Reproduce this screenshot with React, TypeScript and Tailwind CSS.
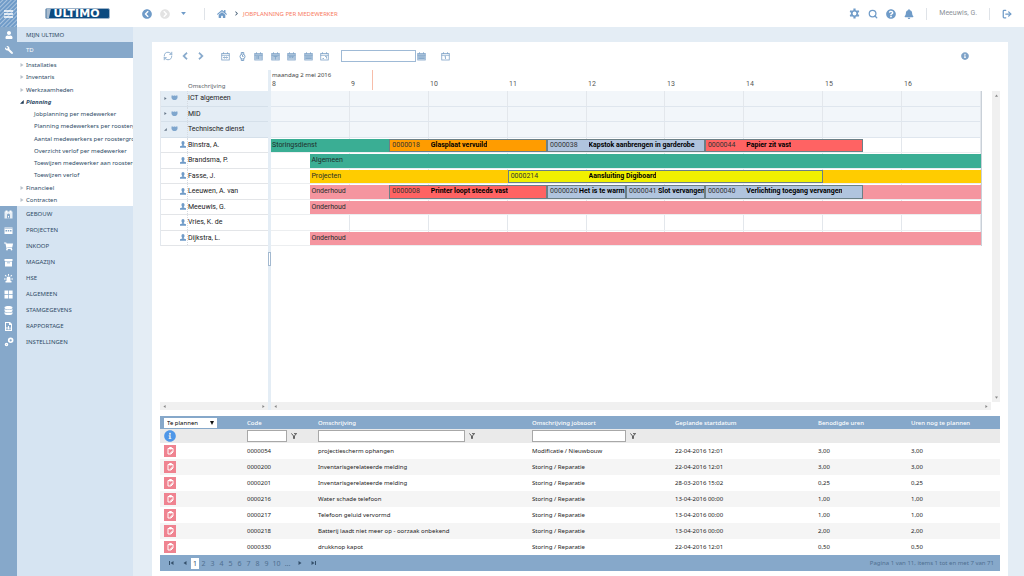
import React from "react";
import { FaHome, FaWrench, FaUser, FaBell, FaQuestionCircle, FaInfoCircle, FaShoppingCart, FaDatabase, FaChevronCircleLeft, FaChevronCircleRight, FaChevronLeft, FaChevronRight } from "react-icons/fa";
import { Search, RefreshCw, LogOut } from "lucide-react";

type IconProps = { className?: string };

function Gear() {
  return (
    <svg viewBox="0 0 20 20" className="size-[11px]" fill="none" stroke="currentColor">
      <circle cx="10" cy="10" r="5" strokeWidth="3" />
      <path d="M10 1V4M10 16V19M2.200 5.500L4.800 7M15.200 13L17.800 14.500M2.200 14.500L4.800 13M15.200 7L17.800 5.500" strokeWidth="4" />
    </svg>
  );
}

function Calendar({ className = "", kind = 0 }: IconProps & { kind?: number }) {
  const solid = kind >= 2 && kind <= 5;
  return (
    <svg viewBox="0 0 18 18" className={`size-[9px] ${className}`} fill="none" stroke="currentColor" strokeWidth="1.6">
      <rect x="1.5" y="3" width="15" height="13" />
      <path d="M1 6.5H17M5 0.5V4M13 0.5V4" />
      {solid && <rect x="2" y="4" width="14" height="11" fill="currentColor" fillOpacity="0.6" stroke="none" />}
      {kind === 0 && <path d="M5 11H13M7 9L5 11L7 13M11 9L13 11L11 13" />}
      {kind === 2 && <path d="M6 8V14M9 8V14" />}
      {kind === 3 && <path d="M5 9H13M9 9V15" />}
      {kind === 4 && <path d="M4 9.500H14M6 9V12M11 9V12" />}
      {kind === 5 && <path d="M3 10H15M3 13H15" />}
      {kind === 6 && <path d="M5 13H8M10 9H13V13" />}
      {kind === 7 && <path d="M7 9.500L9 8.500V14" />}
    </svg>
  );
}

function Watch() {
  return (
    <svg viewBox="0 0 18 18" className="size-[9px]" fill="none" stroke="currentColor" strokeWidth="2">
      <circle cx="9" cy="9" r="5" />
      <path d="M6.500 4V1H11.500V4M6.500 14V17H11.500V14M9 6V9H11" />
    </svg>
  );
}

function Rail({ kind }: { kind: string }) {
  if (kind === "cart") return <FaShoppingCart className="size-[9px]" />;
  if (kind === "data") return <FaDatabase className="size-[9px]" />;
  if (kind === "gears") return (
    <svg viewBox="0 0 18 18" className="size-[10px]" fill="none" stroke="currentColor">
      <circle cx="12" cy="6" r="3.500" strokeWidth="3" />
      <circle cx="4.500" cy="13.500" r="2" strokeWidth="2.500" />
    </svg>
  );
  return (
    <svg viewBox="0 0 18 18" className="size-[9px]" fill="currentColor">
      {kind === "building" && (
        <>
          <path d="M1 3h16v14H1z" fillOpacity=".8" />
          <path d="M3 1h4v4H3zM11 1h4v4h-4z" />
          <path d="M6 17V9l3-2 3 2v8z" fill="#86a8ca" />
          <path d="M8 12h2v3H8z" />
        </>
      )}
      {kind === "projects" && (
        <>
          <path d="M1 3h16v13H1z" />
          <path d="M3 8h3v3H3zM7.500 8h3v3h-3zM12 8h3v3h-3zM1 5h16v1H1z" fill="#86a8ca" />
        </>
      )}
      {kind === "box" && (
        <>
          <path d="M1 2h16v4H1zM2 7h14v10H2z" />
          <path d="M6 9h6v1.500H6z" fill="#86a8ca" />
        </>
      )}
      {kind === "alarm" && <path d="M5 14V9a4 4 0 0 1 8 0v5h2v3H3v-3zM8 0h2v3.500H8zM1.500 3l1.500-1.500 2.500 2.500L4 5.500zM16.500 3L15 1.500 12.500 4 14 5.500zM0 9h3.500v2H0zM14.500 9H18v2h-3.500z" />}
      {kind === "windows" && <path d="M1 1h7.400v7.400H1zM9.800 1h7.400v7.400H9.800zM1 9.800h7.400v7.400H1zM9.800 9.800h7.400v7.400H9.800z" />}
      {kind === "report" && (
        <>
          <path d="M2 0h10l4 4v14H2zM4 2v14h10V6h-4V2z" fillRule="evenodd" />
          <path d="M5 10h2v5H5zM8 8h2v7H8zM11 11h2v4h-2z" />
        </>
      )}
    </svg>
  );
}

function Person({ className = "" }: IconProps) {
  return (
    <svg viewBox="0 0 14 16" className={className} fill="currentColor">
      <path d="M7 0a3.600 4 0 0 1 3.600 4C10.600 6.500 9.500 8 8.700 9v1.500L14 12v3.500H0V12l5.300-1.500V9C4.500 8 3.400 6.500 3.400 4A3.600 4 0 0 1 7 0z" />
    </svg>
  );
}

function Group() {
  return (
    <svg viewBox="0 0 14 12" className="h-[6px] w-[7px] text-[#7fa6cd]" fill="currentColor">
      <path d="M1 1h3l1 1 1-1h2l1 1 1-1h3v5l-2 3-2 1H5L3 9 1 6z" />
    </svg>
  );
}

function Triangle({ open = false, className = "size-1" }: IconProps & { open?: boolean }) {
  return (
    <svg viewBox="0 0 8 8" className={`shrink-0 ${className}`} fill="currentColor">
      {open ? <path d="M7.500 0V7.500H0z" /> : <path d="M1 0L7 4L1 8z" />}
    </svg>
  );
}

function Funnel() {
  return (
    <svg viewBox="0 0 14 14" className="size-[6px]" fill="none" stroke="#444" strokeWidth="2">
      <path d="M1 1L6 7V13H8V7L13 1M7 1.500H13" />
    </svg>
  );
}

type Node = { label: string; depth: 0 | 1; open?: boolean };
const tree: Node[] = [
  { label: "Installaties", depth: 0 },
  { label: "Inventaris", depth: 0 },
  { label: "Werkzaamheden", depth: 0 },
  { label: "Planning", depth: 0, open: true },
  { label: "Jobplanning per medewerker", depth: 1 },
  { label: "Planning medewerkers per roostergroep", depth: 1 },
  { label: "Aantal medewerkers per roostergroep", depth: 1 },
  { label: "Overzicht verlof per medewerker", depth: 1 },
  { label: "Toewijzen medewerker aan roostergroep", depth: 1 },
  { label: "Toewijzen verlof", depth: 1 },
  { label: "Financieel", depth: 0 },
  { label: "Contracten", depth: 0 },
];

const modules = [
  ["GEBOUW", "building"],
  ["PROJECTEN", "projects"],
  ["INKOOP", "cart"],
  ["MAGAZIJN", "box"],
  ["HSE", "alarm"],
  ["ALGEMEEN", "windows"],
  ["STAMGEGEVENS", "data"],
  ["RAPPORTAGE", "report"],
  ["INSTELLINGEN", "gears"],
];

type Shift = { label: string; from: number; to: number; color: string };
type Job = { code: string; title: string; from: number; to: number; color: string };
type Row = { name: string; group?: "open" | "closed"; shift?: Shift; jobs?: Job[] };

const GREEN = "bg-[#3aae94]";
const PINK = "bg-[#f5959f]";
const BLUE = "bg-[#b0c4de]";
const RED = "bg-[#ff6363]";

const rows: Row[] = [
  { name: "ICT algemeen", group: "closed" },
  { name: "MID", group: "closed" },
  { name: "Technische dienst", group: "open" },
  {
    name: "Binstra, A.",
    shift: { label: "Storingsdienst", from: 8, to: 9.5, color: GREEN },
    jobs: [
      { code: "0000018", title: "Glasplaat vervuild", from: 9.5, to: 11.5, color: "bg-[#ff9c00]" },
      { code: "0000038", title: "Kapstok aanbrengen in garderobe", from: 11.5, to: 13.5, color: BLUE },
      { code: "0000044", title: "Papier zit vast", from: 13.5, to: 15.5, color: RED },
    ],
  },
  { name: "Brandsma, P.", shift: { label: "Algemeen", from: 8.5, to: 17, color: GREEN } },
  {
    name: "Fasse, J.",
    shift: { label: "Projecten", from: 8.5, to: 17, color: "bg-[#ffcc00]" },
    jobs: [{ code: "0000214", title: "Aansluiting Digiboard", from: 11, to: 15, color: "bg-[#f0f000]" }],
  },
  {
    name: "Leeuwen, A. van",
    shift: { label: "Onderhoud", from: 8.5, to: 17, color: PINK },
    jobs: [
      { code: "0000008", title: "Printer loopt steeds vast", from: 9.5, to: 11.5, color: RED },
      { code: "0000020", title: "Het is te warm", from: 11.5, to: 12.5, color: BLUE },
      { code: "0000041", title: "Slot vervangen te", from: 12.5, to: 13.5, color: BLUE },
      { code: "0000040", title: "Verlichting toegang vervangen", from: 13.5, to: 15.5, color: BLUE },
    ],
  },
  { name: "Meeuwis, G.", shift: { label: "Onderhoud", from: 8.5, to: 17, color: PINK } },
  { name: "Vries, K. de" },
  { name: "Dijkstra, L.", shift: { label: "Onderhoud", from: 8.5, to: 17, color: PINK } },
];

const hours = [8, 9, 10, 11, 12, 13, 14, 15, 16];
const span = (from: number, to: number) => ({ gridColumn: `${(from - 8) * 2 + 1} / ${(to - 8) * 2 + 1}` });

const openJobs = [
  ["0000054", "projectiescherm ophangen", "Modificatie / Nieuwbouw", "22-04-2016 12:01", "3,00"],
  ["0000200", "Inventarisgerelateerde melding", "Storing / Reparatie", "22-04-2016 12:01", "3,00"],
  ["0000201", "Inventarisgerelateerde melding", "Storing / Reparatie", "28-03-2016 15:02", "0,25"],
  ["0000216", "Water schade telefoon", "Storing / Reparatie", "13-04-2016 00:00", "1,00"],
  ["0000217", "Telefoon geluid vervormd", "Storing / Reparatie", "13-04-2016 00:00", "1,00"],
  ["0000218", "Batterij laadt niet meer op - oorzaak onbekend", "Storing / Reparatie", "13-04-2016 00:00", "2,00"],
  ["0000330", "drukknop kapot", "Storing / Reparatie", "22-04-2016 12:01", "0,50"],
];

function Header() {
  return (
    <header className="flex h-[27px] shrink-0 items-center bg-white text-[#6f9bc8]">
      <button aria-label="Menu" className="flex h-full w-[17px] shrink-0 items-center justify-center bg-[repeating-linear-gradient(135deg,#6f9bc8_0px,#6f9bc8_1px,#a9c3de_2px,#6f9bc8_3px)] text-white">
        <svg viewBox="0 0 9 8" className="h-2 w-[9px]" stroke="currentColor" strokeWidth="1.5"><path d="M0 1H9M0 4H9M0 7H9" /></svg>
      </button>
      <div className="flex w-[116px] shrink-0 justify-center pl-1">
        <a href="#home" className="flex h-[11px] w-[65px] items-center overflow-hidden rounded-[2px] border border-[#9db4ca] bg-[#0b4a80] font-['DejaVu_Sans'] text-[11px] leading-[9px] font-bold text-white">
          <svg viewBox="0 0 6 10" className="h-full w-[6px] shrink-0"><path d="M0 0H5L3 10H0z" fill="#a9bccf" /></svg>
          <span className="pl-0.5">ULTIMO</span>
        </a>
      </div>
      <nav className="flex min-w-0 flex-1 items-center pl-[9px]">
        <button aria-label="Terug"><FaChevronCircleLeft className="size-[10px]" /></button>
        <button aria-label="Vooruit" className="ml-2 text-[#e3e3e3]"><FaChevronCircleRight className="size-[10px]" /></button>
        <button aria-label="Geschiedenis" className="ml-2 flex w-[10px] justify-center"><svg viewBox="0 0 8 5" className="h-[3px] w-[5px]" fill="currentColor"><path d="M0 0H8L4 5z" /></svg></button>
        <span className="ml-4 h-3 border-l border-[#dfe3e8]" />
        <a href="#home" aria-label="Home" className="ml-3"><FaHome className="size-[10px]" /></a>
        <FaChevronRight className="ml-[7px] size-[5px] text-[#3f5870]" />
        <a href="#planning" className="ml-1 text-[6px] whitespace-nowrap text-[#f77b62]">JOBPLANNING PER MEDEWERKER</a>
      </nav>
      <div className="flex items-center pr-3">
        <button aria-label="Instellingen"><Gear /></button>
        <button aria-label="Zoeken" className="ml-2"><Search className="size-[10px]" strokeWidth={3} /></button>
        <button aria-label="Help" className="ml-2"><FaQuestionCircle className="size-[10px]" /></button>
        <button aria-label="Meldingen" className="ml-2"><FaBell className="size-[10px]" /></button>
        <span className="ml-3 h-3 border-l border-[#dfe3e8]" />
        <span className="mx-3 font-[Roboto] text-[7px] text-[#8b9299]">Meeuwis, G.</span>
        <span className="h-3 border-l border-[#dfe3e8]" />
        <button aria-label="Afmelden" className="ml-3"><LogOut className="size-[10px]" strokeWidth={3} /></button>
      </div>
    </header>
  );
}

function Sidebar() {
  return (
    <aside className="flex w-[133px] shrink-0 flex-col bg-[linear-gradient(to_right,#86a8ca_17px,#d6e4f2_17px)] text-[6px] text-[#2f4b66]">
      <a href="#mijn" className="flex h-[15px] items-center">
        <span className="flex w-[17px] justify-center text-white"><FaUser className="size-[8px]" /></span>
        <span className="pl-[9px]">MIJN ULTIMO</span>
      </a>
      <a href="#td" className="flex h-4 items-center bg-[#86a8ca] text-white">
        <span className="flex w-[17px] justify-center"><FaWrench className="size-[8px] -scale-x-100" /></span>
        <span className="pl-[9px]">TD</span>
      </a>
      <ul className="grid h-[148px] grid-rows-12 bg-white pt-px text-[#2c4a66]">
        {tree.map((n) => (
          <li key={n.label} className={`flex min-w-0 items-center overflow-hidden ${n.depth ? "pl-[34px]" : "pl-5"}`}>
            {n.depth === 0 && <Triangle open={n.open} className={n.open ? "mr-0.5 size-1 text-[#1d3a56]" : "mr-0.5 size-1 text-[#b9c2cb]"} />}
            <a href="#item" className={`whitespace-nowrap ${n.open ? "font-bold italic" : ""}`}>{n.label}</a>
          </li>
        ))}
      </ul>
      {modules.map(([label, kind]) => (
        <a key={label} href="#module" className="flex h-4 items-center">
          <span className="flex w-[17px] justify-center text-white"><Rail kind={kind} /></span>
          <span className="pl-[9px]">{label}</span>
        </a>
      ))}
    </aside>
  );
}

function Toolbar() {
  return (
    <div className="flex h-7 shrink-0 items-center pl-[3px] text-[#7fa3c8]">
      <div className="flex flex-1 items-center">
        <div className="flex w-[42px] items-center justify-between">
          <button aria-label="Vernieuwen"><RefreshCw className="size-[10px]" strokeWidth={2} /></button>
          <button aria-label="Vorige"><FaChevronLeft className="size-2 stroke-current stroke-[40px]" /></button>
          <button aria-label="Volgende"><FaChevronRight className="size-2 stroke-current stroke-[40px]" /></button>
        </div>
        <div className="ml-4 flex w-[108px] items-center justify-between">
          <button aria-label="Vandaag"><Calendar kind={0} /></button>
          <button aria-label="Nu"><Watch /></button>
          <button aria-label="Dag"><Calendar kind={2} /></button>
          <button aria-label="Werkweek"><Calendar kind={3} /></button>
          <button aria-label="Week"><Calendar kind={4} /></button>
          <button aria-label="Maand"><Calendar kind={5} /></button>
          <button aria-label="Periode"><Calendar kind={6} /></button>
        </div>
        <input aria-label="Datum" className="ml-3 h-3 w-[75px] border border-[#9fbad6] px-1 text-[7px] outline-none" />
        <button aria-label="Kies datum"><Calendar kind={5} className="ml-px" /></button>
        <button aria-label="Ga naar dag" className="ml-[15px]"><Calendar kind={7} /></button>
      </div>
      <FaInfoCircle className="mr-[31px] size-2" />
    </div>
  );
}

function Planner() {
  return (
    <section className="flex min-h-0 flex-1">
      <div className="flex w-[108px] shrink-0 flex-col">
        <div className="flex h-[21px] items-end pb-0.5 pl-7 font-['Noto_Sans'] text-[6px] text-[#555e66]">Omschrijving</div>
        <ul className="grid h-[155px] grid-rows-10 border-l border-[#e3e8ee]">
          {rows.map((r) => (
            <li key={r.name} className={`flex items-center border-b ${r.group ? "border-[#d5e0ea] bg-[#e4edf5]" : "border-[#e3e5e8]"}`}>
              <span className={`flex h-full w-[27px] shrink-0 items-center gap-1 border-r border-dotted border-[#d5dbe2] ${r.group ? "pl-[3px]" : "justify-end pr-px"}`}>
                {r.group ? (
                  <><Triangle open={r.group === "open"} className="size-[3px] text-[#68798a]" /><Group /></>
                ) : (
                  <Person className="h-[7px] w-[6px] text-[#6f9bc8]" />
                )}
              </span>
              <span className="pt-px whitespace-nowrap">{r.name}</span>
            </li>
          ))}
        </ul>
        <div className="flex-1" />
        <div className="flex h-2 items-center justify-between bg-[#f0f0f0] px-[3px] text-[#888]">
          <Triangle className="size-[3px] rotate-180" /><Triangle className="size-[3px]" />
        </div>
      </div>
      <div className="flex w-[3px] shrink-0 flex-col items-center bg-[#e4edf5]">
        <div className="mt-[182px] h-[14px] w-[3px] shrink-0 border border-[#a3b9d0] bg-white" />
      </div>
      <div className="flex min-w-0 flex-1 flex-col">
        <div className="relative mr-[18px] h-[21px] leading-[9px]">
          <div className="pl-px pt-px font-['Noto_Sans'] text-[6px] text-[#444]">maandag 2 mei 2016</div>
          <div className="grid grid-cols-9 text-[#555]">
            {hours.map((h) => <span key={h} className="pl-px">{h}</span>)}
          </div>
          <span className="absolute top-0 h-5 border-l border-[#f7bda9]" style={{ left: `${(1.28 / 9) * 100}%` }} />
        </div>
        <div className="flex min-h-0 flex-1">
          <div className="min-w-0 flex-1">
            <div className="mr-[10px] grid h-[155px] grid-rows-10 border-r border-[#c9d0d8]">
              {rows.map((r) => (
                <div key={r.name} className={`grid grid-cols-18 grid-rows-1 border-b ${r.group ? "border-[#dfe6ee] bg-[#f2f6fa]" : "border-[#eceef0]"}`}>
                  {hours.map((h) => <span key={h} className="row-start-1 border-r border-[#e3e7ec]" style={span(h, h + 1)} />)}
                  {r.shift && (
                    <div className={`row-start-1 mt-px flex items-center overflow-hidden pl-px whitespace-nowrap text-[#1f2d2b] ${r.shift.color}`} style={span(r.shift.from, r.shift.to)}>{r.shift.label}</div>
                  )}
                  {r.jobs?.map((j) => (
                    <div key={j.code} className={`row-start-1 mt-px flex min-w-0 items-center overflow-hidden border border-[#6b7f86] pl-0.5 leading-[11px] whitespace-nowrap ${j.color}`} style={span(j.from, j.to)}>
                      <span className="w-1/4 min-w-[29px] shrink-0 text-[#333]">{j.code}</span>
                      <span className="min-w-0 overflow-hidden font-bold text-black">{j.title}</span>
                    </div>
                  ))}
                </div>
              ))}
            </div>
          </div>
          <div className="flex w-2 shrink-0 flex-col items-center justify-between bg-[#f0f0f0] py-[3px] text-[#888]">
            <Triangle className="size-[3px] -rotate-90" /><Triangle className="size-[3px] rotate-90" />
          </div>
        </div>
        <div className="mr-[9px] flex h-2 shrink-0 items-center justify-between bg-[#f0f0f0] px-[3px] text-[#888]">
          <Triangle className="size-[3px] rotate-180" /><Triangle className="size-[3px]" />
        </div>
      </div>
    </section>
  );
}

function FilterField({ label, width }: { label: string; width: string }) {
  return (
    <div className="flex items-center gap-1">
      <input aria-label={label} className={`h-3 border border-[#a8a8a8] bg-white px-0.5 outline-none ${width}`} />
      <button aria-label={`Filter ${label}`}><Funnel /></button>
    </div>
  );
}

function JobTable() {
  return (
    <section className="mt-[6px] shrink-0 font-['Noto_Sans'] text-[6px] text-[#222]">
      <table className="w-full table-fixed border-collapse text-left">
        <colgroup>
          <col className="w-[87px]" /><col className="w-[71px]" /><col className="w-[214px]" /><col className="w-[143px]" /><col className="w-[143px]" /><col className="w-[93px]" /><col className="w-[89px]" />
        </colgroup>
        <thead>
          <tr className="h-[13px] bg-[#86a8ca] text-white">
            <th className="p-0 pl-1">
              <div className="relative flex h-[10px] w-[53px] items-center bg-white">
                <select aria-label="Status" className="h-full w-full appearance-none pl-[3px] font-normal text-black outline-none"><option>Te plannen</option></select>
                <svg viewBox="0 0 8 8" className="pointer-events-none absolute right-[3px] size-1" fill="#111"><path d="M0 0H8L4 8z" /></svg>
              </div>
            </th>
            {["Code", "Omschrijving", "Omschrijving jobsoort", "Geplande startdatum", "Benodigde uren", "Uren nog te plannen"].map((h) => (
              <th key={h} className="p-0 font-medium">{h}</th>
            ))}
          </tr>
          <tr className="h-[14px] bg-[#eaeaea]">
            <td className="p-0 pl-1"><FaInfoCircle className="size-3 text-[#4f97e8]" /></td>
            <td className="p-0"><FilterField label="Code" width="w-10" /></td>
            <td className="p-0"><FilterField label="Omschrijving" width="w-[147px]" /></td>
            <td className="p-0"><FilterField label="Omschrijving jobsoort" width="w-[94px]" /></td>
            <td colSpan={3} />
          </tr>
        </thead>
        <tbody>
          {openJobs.map(([code, title, kind, start, hrs]) => (
            <tr key={code} className="h-4 even:bg-[#f5f5f5]">
              <td className="p-0 pl-1">
                <span className="flex size-3 items-center justify-center bg-[#ef8390] text-white">
                  <svg viewBox="0 0 14 16" className="h-2 w-[7px]" fill="none" stroke="currentColor" strokeWidth="2"><path d="M2 3H12V10L8 14H2zM12 10H8V14M5 1H9V4H5z" /></svg>
                </span>
              </td>
              <td className="p-0">{code}</td>
              <td className="p-0">{title}</td>
              <td className="p-0">{kind}</td>
              <td className="p-0">{start}</td>
              <td className="p-0">{hrs}</td>
              <td className="p-0">{hrs}</td>
            </tr>
          ))}
        </tbody>
      </table>
      <footer className="flex h-4 items-center justify-between bg-[#86a8ca] pr-[6px] pl-[9px] text-[#4f6f90]">
        <div className="flex items-center text-[7px] text-[#34506b]">
          <button aria-label="Eerste" className="flex w-[6px] items-center"><span className="h-1 border-l" /><Triangle className="size-1 rotate-180" /></button>
          <button aria-label="Vorige pagina" className="mr-1 ml-2"><Triangle className="size-1 rotate-180" /></button>
          <span className="flex h-[11px] w-2 items-center justify-center bg-white">1</span>
          {[2, 3, 4, 5, 6, 7, 8, 9].map((n) => <button key={n} className="w-[9px] text-[#4f6f90]">{n}</button>)}
          <button className="w-[11px] text-[#4f6f90]">10</button>
          <span className="w-[11px] text-center text-[#4f6f90]">...</span>
          <button aria-label="Volgende pagina" className="ml-[5px]"><Triangle /></button>
          <button aria-label="Laatste" className="ml-[9px] flex items-center"><Triangle /><span className="h-1 border-l" /></button>
        </div>
        <span>Pagina 1 van 11, items 1 tot en met 7 van 71</span>
      </footer>
    </section>
  );
}

export default function App() {
  return (
    <div className="flex min-h-screen flex-col bg-[#e4edf5] font-['Noto_Sans',sans-serif] leading-none">
      <Header />
      <div className="flex flex-1">
        <Sidebar />
        <main className="mt-[15px] mr-4 ml-[19px] flex min-w-0 flex-1 flex-col bg-white px-2 pb-[5px] font-[Roboto] text-[7px] text-[#222]">
          <Toolbar />
          <Planner />
          <JobTable />
        </main>
      </div>
    </div>
  );
}
